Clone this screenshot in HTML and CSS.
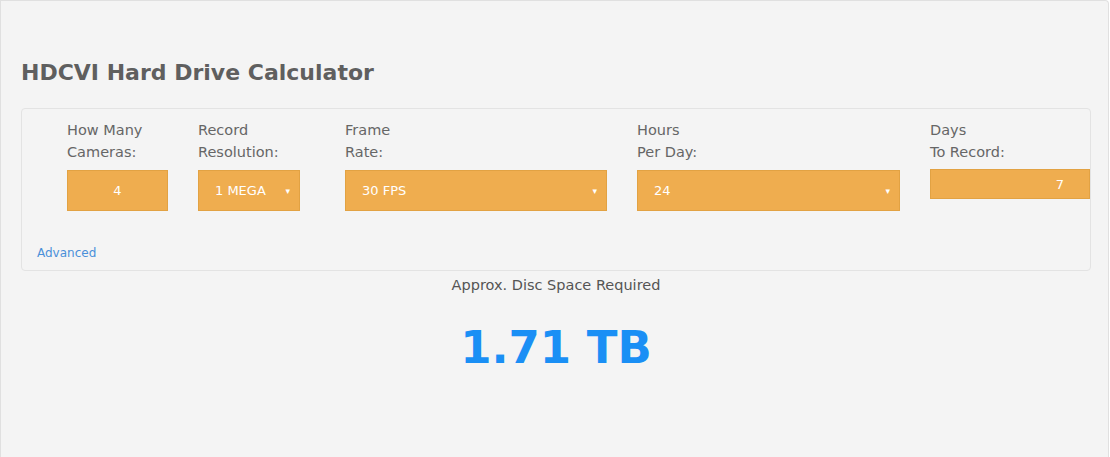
FILE: index.html
```html
<!DOCTYPE html>
<html lang="en">
  <head>
    <meta charset="UTF-8" />
    <meta name="viewport" content="width=device-width, initial-scale=1.0" />
    <title>HDCVI Hard Drive Calculator</title>
    <link rel="stylesheet" href="styles.css">
  </head>
  <body>
    <div class="calculator">
      <h1>HDCVI Hard Drive Calculator</h1>

      <div class="panel">
        <div class="fields">
          <div class="field">
            <label for="cameras">How Many<br />Cameras:</label>
            <input type="text" id="cameras" class="box box-center" value="4" />
          </div>
          <div class="field">
            <label for="resolution">Record<br />Resolution:</label>
            <div class="select box box-small">
              <span>1 MEGA</span>
              <span class="caret">&#9662;</span>
            </div>
          </div>
          <div class="field">
            <label for="fps">Frame<br />Rate:</label>
            <div class="select box">
              <span>30 FPS</span>
              <span class="caret">&#9662;</span>
            </div>
          </div>
          <div class="field">
            <label for="hours">Hours<br />Per Day:</label>
            <div class="select box">
              <span>24</span>
              <span class="caret">&#9662;</span>
            </div>
          </div>
          <div class="field">
            <label for="days">Days<br />To Record:</label>
            <input type="text" id="days" class="box box-right" value="7" />
          </div>
        </div>
        <a href="#" class="advanced">Advanced</a>
      </div>

      <div class="result">
        <p class="result-label">Approx. Disc Space Required</p>
        <p class="result-value">1.71 TB</p>
      </div>
    </div>
  </body>
</html>
```

FILE: styles.css
```css
body {
  margin: 0;
  padding: 0;
  font-family: "DejaVu Sans", Verdana, sans-serif;
  background-color: #fff;
}
.calculator {
  box-sizing: border-box;
  width: 1109px;
  height: 457px;
  background-color: #f4f4f4;
  border: 1px solid #e0e0e0;
  border-bottom: none;
  border-radius: 0 4px 0 0;
  padding: 0 0 0 20px;
}
h1 {
  margin: 58px 0 0 0;
  font-size: 22px;
  line-height: 28px;
  font-weight: bold;
  color: #5f5f5f;
}
.panel {
  box-sizing: border-box;
  width: 1070px;
  height: 163px;
  margin-top: 21px;
  border: 1px solid #e3e3e3;
  border-radius: 4px;
  padding: 10px 0 0 15px;
}
.fields {
  display: grid;
  grid-template-columns: 101px 117px 262px 263px 1fr;
  column-gap: 30px;
  padding-left: 30px;
}
label {
  display: block;
  font-size: 14.5px;
  line-height: 22px;
  color: #666;
  margin-bottom: 7px;
}
.box {
  box-sizing: border-box;
  display: block;
  width: 100%;
  height: 41px;
  margin: 0;
  background-color: #efad4f;
  border: 1px solid #e2a243;
  color: #fff;
  font-family: "DejaVu Sans", Verdana, sans-serif;
  font-size: 13px;
  outline: none;
}
.box-center {
  text-align: center;
  margin-top: 1px;
}
.box-right {
  height: 30px;
  margin-top: -1px;
  text-align: right;
  padding-right: 25px;
}
.box-small {
  width: 102px;
}
.select {
  display: flex;
  align-items: center;
  justify-content: space-between;
  padding: 0 9px 0 16px;
}
.caret {
  font-size: 9px;
}
.advanced {
  display: inline-block;
  margin-top: 35px;
  font-size: 12px;
  color: #4a90d9;
  text-decoration: none;
}
.result {
  width: 1070px;
  text-align: center;
}
.result-label {
  margin: 4px 0 0 0;
  font-size: 14.5px;
  line-height: 20px;
  color: #555;
}
.result-value {
  margin: 27px 0 0 0;
  font-size: 45px;
  line-height: 52px;
  font-weight: bold;
  color: #1a8ff5;
}
```
